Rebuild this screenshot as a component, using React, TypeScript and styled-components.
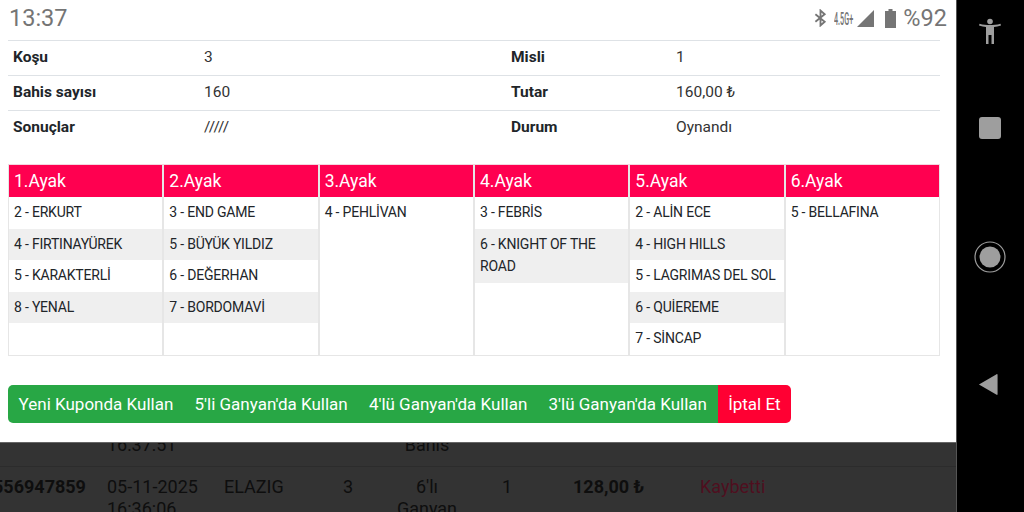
import React from "react";
import styled, { createGlobalStyle } from "styled-components";

const GlobalStyle = createGlobalStyle`
  html, body {
    margin: 0;
    padding: 0;
    background: #000;
  }
  * {
    box-sizing: border-box;
  }
`;

const Screen = styled.div`
  width: 1024px;
  height: 512px;
  display: flex;
  overflow: hidden;
  font-family: Roboto, "Liberation Sans", sans-serif;
`;

const Content = styled.div`
  width: 956px;
  height: 512px;
  display: flex;
  flex-direction: column;
  background: #333;
`;

const Modal = styled.div`
  height: 443px;
  flex-shrink: 0;
  background: #fff;
  padding: 0 16px 0 8px;
  border-bottom: 1px solid #666;
`;

const StatusBar = styled.div`
  height: 40px;
  display: flex;
  align-items: center;
  justify-content: space-between;
  margin-right: -8px;
  color: #757575;
`;

const Clock = styled.span`
  font-size: 23.5px;
  padding-left: 1px;
  margin-top: -4px;
`;

const StatusIcons = styled.div`
  display: flex;
  align-items: center;
  margin-top: -4px;
  padding-right: 1px;
`;

const NetworkLabel = styled.span`
  font-size: 19px;
  font-weight: 500;
  width: 18px;
  margin: 0 5px 0 7px;
  display: inline-block;
  white-space: nowrap;
  transform: scaleX(0.38);
  transform-origin: left center;
`;

const Battery = styled.span`
  font-size: 23.5px;
  margin-left: 7px;
`;

const InfoRow = styled.div`
  height: 35px;
  display: grid;
  grid-template-columns: 191px 307px 165px 1fr;
  align-items: center;
  border-top: 1px solid #dee2e6;
  font-size: 15.5px;
  color: #212529;
  padding: 0 0 2px 5px;
`;

const InfoLabel = styled.span`
  font-weight: 700;
`;

const InfoValue = styled.span`
  color: #333;
`;

const LegGrid = styled.div`
  display: grid;
  grid-template-columns: repeat(6, 1fr);
  gap: 2px;
  margin-top: 19px;
  height: 192px;
  background: #e6e6e6;
  border: 1px solid #e6e6e6;
  border-top: 1px solid #f5d5df;
`;

const LegColumn = styled.div`
  background: #fff;
  min-width: 0;
`;

const LegHeader = styled.div`
  height: 32px;
  background: #ff0050;
  color: #fff;
  font-size: 17.5px;
  line-height: 32px;
  padding-left: 5px;
`;

const Horse = styled.div<{ $even: boolean }>`
  padding: 4px 5px 5px;
  font-size: 14px;
  letter-spacing: -0.2px;
  line-height: 22.6px;
  color: #212529;
  background: ${(p) => (p.$even ? "#efefef" : "#fff")};
`;

const ButtonGroup = styled.div`
  display: inline-flex;
  margin-top: 29px;
  height: 38px;
  border-radius: 5px;
  overflow: hidden;
`;

const ActionButton = styled.div<{ $danger?: boolean }>`
  display: flex;
  align-items: center;
  padding: 0 10.6px 1px;
  font-size: 17px;
  white-space: nowrap;
  color: #fff;
  background: ${(p) => (p.$danger ? "#ff0033" : "#28a745")};
`;

const BackdropRow = styled.div<{ $height: number }>`
  height: ${(p) => p.$height}px;
  flex-shrink: 0;
  overflow: hidden;
  display: grid;
  grid-template-columns: 107px 117px 119px 9px 150px 71px 127px 1fr;
  font-size: 18px;
  line-height: 21.6px;
  color: #0e0e0e;
`;

/* the row the sheet covers: only the bottom of its last line still shows */
const TopRow = styled(BackdropRow)`
  align-content: end;
  padding-bottom: 10px;
`;

const LastRow = styled(BackdropRow)`
  align-items: start;
  padding-top: 9px;
`;

const RowDivider = styled.div`
  height: 1px;
  flex-shrink: 0;
  background: #2c2c2c;
`;

const Cell = styled.div<{ $bold?: boolean; $center?: boolean; $loss?: boolean }>`
  white-space: nowrap;
  font-weight: ${(p) => (p.$bold ? 700 : 400)};
  text-align: ${(p) => (p.$center ? "center" : "left")};
  color: ${(p) => (p.$loss ? "#4f0f1f" : "#0e0e0e")};
`;

const OrderCell = styled(Cell)`
  margin-left: -7px;
`;

const NavBar = styled.div`
  width: 68px;
  height: 512px;
  background: #000;
  display: flex;
  flex-direction: column;
  align-items: center;
  padding: 18px 1px 0 0;
  color: #9e9e9e;
  border-left: 1px solid #555;
`;

const NavSlot = styled.div<{ $height: number }>`
  height: ${(p) => p.$height}px;
  display: flex;
  align-items: flex-start;
  justify-content: center;
`;

const BackSlot = styled(NavSlot)`
  margin-right: 3px;
`;

const legs = [
  { title: "1.Ayak", horses: ["2 - ERKURT", "4 - FIRTINAYÜREK", "5 - KARAKTERLİ", "8 - YENAL"] },
  { title: "2.Ayak", horses: ["3 - END GAME", "5 - BÜYÜK YILDIZ", "6 - DEĞERHAN", "7 - BORDOMAVİ"] },
  { title: "3.Ayak", horses: ["4 - PEHLİVAN"] },
  { title: "4.Ayak", horses: ["3 - FEBRİS", "6 - KNIGHT OF THE ROAD"] },
  { title: "5.Ayak", horses: ["2 - ALİN ECE", "4 - HIGH HILLS", "5 - LAGRIMAS DEL SOL", "6 - QUİEREME", "7 - SİNCAP"] },
  { title: "6.Ayak", horses: ["5 - BELLAFINA"] },
];

const info = [
  ["Koşu", "3", "Misli", "1"],
  ["Bahis sayısı", "160", "Tutar", "160,00 ₺"],
  ["Sonuçlar", "/////", "Durum", "Oynandı"],
];

const actions = [
  "Yeni Kuponda Kullan",
  "5'li Ganyan'da Kullan",
  "4'lü Ganyan'da Kullan",
  "3'lü Ganyan'da Kullan",
];

const App: React.FC = () => {
  return (
    <Screen>
      <GlobalStyle />
      <Content>
        <Modal>
          <StatusBar>
            <Clock>13:37</Clock>
            <StatusIcons>
              <svg width="13" height="18" viewBox="0 0 14 18" fill="none" stroke="currentColor" strokeWidth="2">
                <path d="M1.5 5l10 8-4.500 4V1l4.500 4-10 8" />
              </svg>
              <NetworkLabel>4.5G+</NetworkLabel>
              <svg width="17" height="17" viewBox="0 0 17 17" fill="currentColor" style={{ marginRight: 11 }}>
                <path d="M0 17L17 0v17z" />
              </svg>
              <svg width="11" height="19" viewBox="0 0 11 19" fill="currentColor">
                <path d="M3.500 0h4v2H11v17H0V2h3.500z" />
              </svg>
              <Battery>%92</Battery>
            </StatusIcons>
          </StatusBar>

          {info.map((row) => (
            <InfoRow key={row[0]}>
              <InfoLabel>{row[0]}</InfoLabel>
              <InfoValue>{row[1]}</InfoValue>
              <InfoLabel>{row[2]}</InfoLabel>
              <InfoValue>{row[3]}</InfoValue>
            </InfoRow>
          ))}

          <LegGrid>
            {legs.map((leg) => (
              <LegColumn key={leg.title}>
                <LegHeader>{leg.title}</LegHeader>
                {leg.horses.map((horse, i) => (
                  <Horse key={horse} $even={i % 2 === 1}>
                    {horse}
                  </Horse>
                ))}
              </LegColumn>
            ))}
          </LegGrid>

          <ButtonGroup>
            {actions.map((action) => (
              <ActionButton key={action}>{action}</ActionButton>
            ))}
            <ActionButton $danger>İptal Et</ActionButton>
          </ButtonGroup>
        </Modal>

        <TopRow $height={23}>
          <span />
          <Cell>16:37:51</Cell>
          <span />
          <span />
          <Cell $center>Bahis</Cell>
        </TopRow>
        <RowDivider />
        <LastRow $height={45}>
          <OrderCell $bold>556947859</OrderCell>
          <Cell>
            05-11-2025
            <br />
            16:36:06
          </Cell>
          <Cell>ELAZIG</Cell>
          <Cell>3</Cell>
          <Cell $center>
            6'lı
            <br />
            Ganyan
          </Cell>
          <Cell>1</Cell>
          <Cell $bold>128,00 ₺</Cell>
          <Cell $loss>Kaybetti</Cell>
        </LastRow>
      </Content>

      <NavBar>
        <NavSlot $height={99}>
          <svg width="24" height="28" viewBox="0 0 24 28" fill="currentColor">
            <circle cx="12" cy="3.500" r="2.800" />
            <path d="M1 7.500l.5-1.800c3.500 1 7 1.300 10.500 1.300s7-.3 10.500-1.300l.5 1.800c-2.500.8-5 1.200-7 1.400V26h-2.500v-9h-3v9H8V8.900C6 8.700 3.500 8.300 1 7.500z" />
          </svg>
        </NavSlot>
        <NavSlot $height={124}>
          <svg width="22" height="22" viewBox="0 0 22 22" fill="currentColor">
            <rect width="22" height="22" rx="3" />
          </svg>
        </NavSlot>
        <NavSlot $height={132}>
          <svg width="32" height="32" viewBox="0 0 32 32" fill="currentColor">
            <circle cx="16" cy="16" r="15" fill="none" stroke="currentColor" strokeWidth="1.200" />
            <circle cx="16" cy="16" r="10.500" />
          </svg>
        </NavSlot>
        <BackSlot $height={40}>
          <svg width="21" height="23" viewBox="0 0 22 24" fill="currentColor">
            <path d="M1 12L19.500 1.200c.5-.3 1 0 1 .6v20.400c0 .6-.5.9-1 .6z" />
          </svg>
        </BackSlot>
      </NavBar>
    </Screen>
  );
};

export default App;
